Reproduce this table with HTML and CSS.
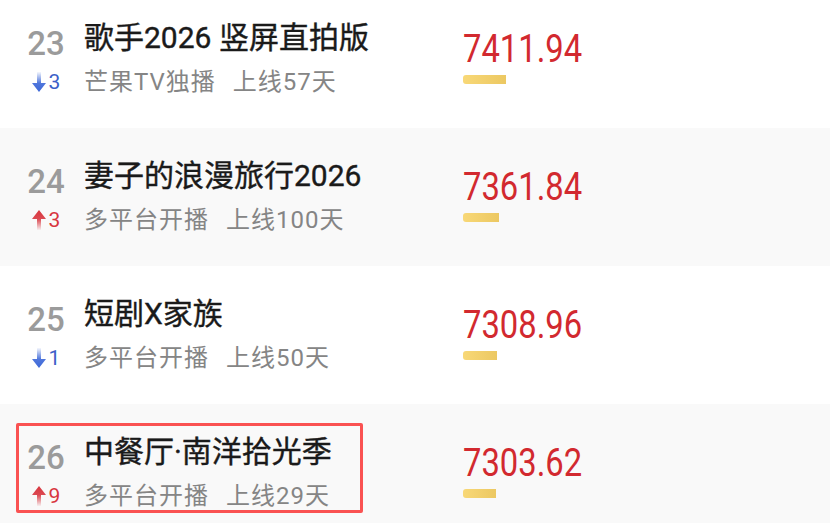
FILE: index.html
```html
<!doctype html>
<html lang="zh-CN">
 <head>
  <meta charset="utf-8">
  <meta name="viewport" content="width=device-width, initial-scale=1.0">
  <title>热度榜</title>
  <link rel="stylesheet" href="styles.css">
 </head>
 <body>
  <svg width="0" height="0" class="defs">
   <defs>
    <linearGradient id="fade-down" x1="0" y1="0" x2="0" y2="1">
     <stop offset="0" stop-color="#3d68d8" stop-opacity="0.05"/>
     <stop offset="0.55" stop-color="#3d68d8" stop-opacity="0.9"/>
     <stop offset="1" stop-color="#3d68d8"/>
    </linearGradient>
    <linearGradient id="fade-up" x1="0" y1="1" x2="0" y2="0">
     <stop offset="0" stop-color="#d8363f" stop-opacity="0.05"/>
     <stop offset="0.55" stop-color="#d8363f" stop-opacity="0.9"/>
     <stop offset="1" stop-color="#d8363f"/>
    </linearGradient>
   </defs>
  </svg>

  <div class="rank-list">
   <!-- 23 -->
   <div class="rank-row">
    <div class="rank-col">
     <div class="rank-no">23</div>
     <div class="rank-change down">
      <svg class="arrow" width="14" height="20" viewBox="0 0 14 20"><path d="M5 0H9V11H14L7 20L0 11H5Z" fill="url(#fade-down)"/></svg>
      <span>3</span>
     </div>
    </div>
    <div class="info-col">
     <div class="title">歌手2026 竖屏直拍版</div>
     <div class="meta"><span>芒果TV独播</span><span>上线57天</span></div>
    </div>
    <div class="score-col">
     <div class="score">7411.94</div>
     <div class="heat-bar" style="width: 43px"></div>
    </div>
   </div>

   <!-- 24 -->
   <div class="rank-row alt">
    <div class="rank-col">
     <div class="rank-no">24</div>
     <div class="rank-change up">
      <svg class="arrow" width="14" height="20" viewBox="0 0 14 20"><path d="M7 0L14 9H9V20H5V9H0Z" fill="url(#fade-up)"/></svg>
      <span>3</span>
     </div>
    </div>
    <div class="info-col">
     <div class="title">妻子的浪漫旅行2026</div>
     <div class="meta"><span>多平台开播</span><span>上线100天</span></div>
    </div>
    <div class="score-col">
     <div class="score">7361.84</div>
     <div class="heat-bar" style="width: 36px"></div>
    </div>
   </div>

   <!-- 25 -->
   <div class="rank-row">
    <div class="rank-col">
     <div class="rank-no">25</div>
     <div class="rank-change down">
      <svg class="arrow" width="14" height="20" viewBox="0 0 14 20"><path d="M5 0H9V11H14L7 20L0 11H5Z" fill="url(#fade-down)"/></svg>
      <span>1</span>
     </div>
    </div>
    <div class="info-col">
     <div class="title">短剧X家族</div>
     <div class="meta"><span>多平台开播</span><span>上线50天</span></div>
    </div>
    <div class="score-col">
     <div class="score">7308.96</div>
     <div class="heat-bar" style="width: 34px"></div>
    </div>
   </div>

   <!-- 26 -->
   <div class="rank-row alt">
    <div class="rank-col">
     <div class="rank-no">26</div>
     <div class="rank-change up">
      <svg class="arrow" width="14" height="20" viewBox="0 0 14 20"><path d="M7 0L14 9H9V20H5V9H0Z" fill="url(#fade-up)"/></svg>
      <span>9</span>
     </div>
    </div>
    <div class="info-col">
     <div class="title">中餐厅·南洋拾光季</div>
     <div class="meta"><span>多平台开播</span><span>上线29天</span></div>
    </div>
    <div class="score-col">
     <div class="score">7303.62</div>
     <div class="heat-bar" style="width: 33px"></div>
    </div>
    <div class="highlight"></div>
   </div>
  </div>
 </body>
</html>
```

FILE: styles.css
```css
body {
	margin: 0;
	padding: 0;
	background-color: #ffffff;
	font-family: Roboto, "Noto Sans CJK SC", sans-serif;
	overflow: hidden;
}

.defs {
	position: absolute;
}

.rank-list {
	margin-top: -10px;
}

.rank-row {
	position: relative;
	display: flex;
	height: 138px;
	padding-left: 26px;
	box-sizing: border-box;
}

.rank-row.alt {
	background-color: #f9f9f9;
}

/* rank number + movement */
.rank-col {
	width: 40px;
	display: flex;
	flex-direction: column;
	align-items: center;
	padding-top: 36px;
}

.rank-no {
	font-size: 33px;
	line-height: 36px;
	font-weight: 500;
	color: #9b9b9b;
}

.rank-change {
	display: flex;
	align-items: center;
	gap: 3px;
	margin-top: 10px;
	font-size: 21px;
	line-height: 20px;
}

.rank-change .arrow {
	display: block;
}

.rank-change.down {
	color: #3d5fc8;
}

.rank-change.up {
	color: #d8363f;
}

/* title + meta */
.info-col {
	width: 379px;
	margin-left: 18px;
	padding-top: 30px;
}

.title {
	font-size: 30px;
	line-height: 36px;
	font-weight: 400;
	color: #1a1a1a;
	-webkit-text-stroke: 0.4px #1a1a1a;
	white-space: nowrap;
}

.meta {
	display: flex;
	gap: 17px;
	margin-top: 11px;
	font-size: 24px;
	line-height: 30px;
	letter-spacing: 1px;
	color: #858585;
}

/* heat score */
.score-col {
	padding-top: 37px;
}

.score {
	font-family: Roboto, sans-serif;
	font-size: 39px;
	line-height: 44px;
	font-weight: 400;
	color: #d2292f;
	transform: scaleX(0.84);
	transform-origin: left center;
}

.heat-bar {
	height: 9px;
	margin-top: 4px;
	border-radius: 3px 0 0 3px;
	background: linear-gradient(90deg, #f8d877 0%, #ecc862 100%);
}

.highlight {
	position: absolute;
	left: 16px;
	top: 19px;
	width: 347px;
	height: 90px;
	box-sizing: border-box;
	border: 3px solid #fa5252;
	border-radius: 2px;
}
```
